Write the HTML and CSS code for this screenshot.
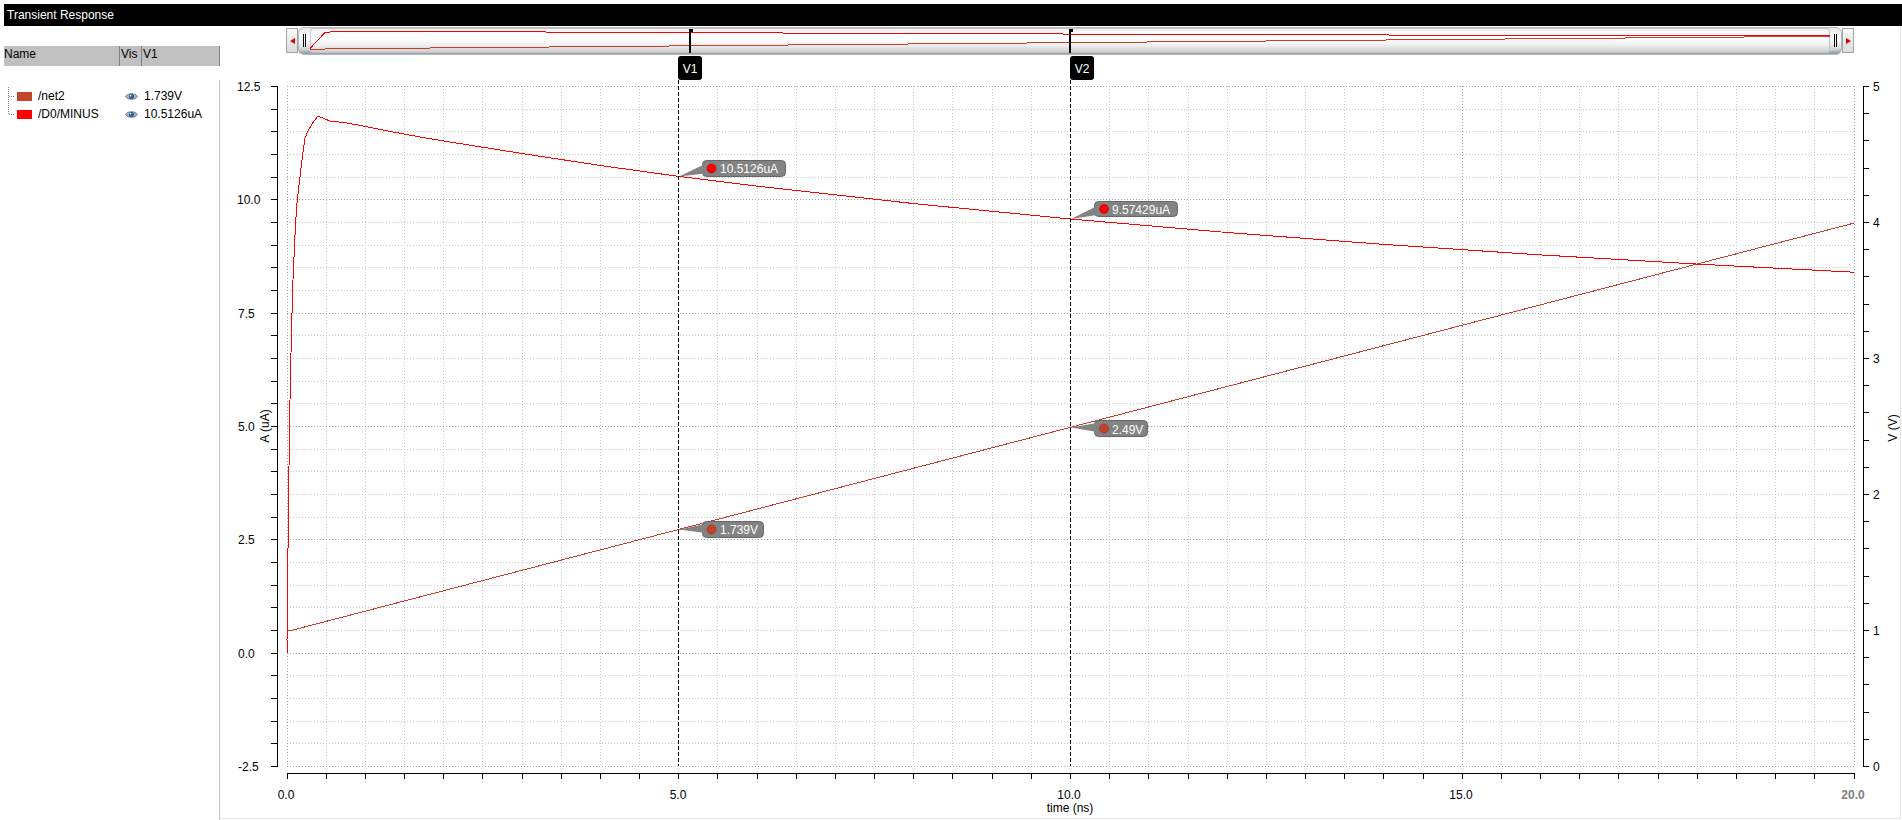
FILE: index.html
```html
<!DOCTYPE html>
<html>
<head>
<meta charset="utf-8">
<title>Transient Response</title>
<link rel="stylesheet" href="styles.css">
</head>
<body>
<div class="app">
  <div class="titlebar">Transient Response</div>
  <div class="main">
    <aside class="legend">
      <div class="lg-head">
        <div class="col name">Name</div>
        <div class="col vis">Vis</div>
        <div class="col val">V1</div>
      </div>
      <div class="lg-list">
        <div class="lg-row">
          <div class="col name">
            <svg class="tree" width="6" height="18" viewBox="0 0 6 18"><path d="M0.5 0V18M0.5 9.5H6"/></svg>
            <span class="swatch net2"></span><span>/net2</span>
          </div>
          <div class="col vis">
            <svg class="eye" width="13" height="9" viewBox="0 0 13 9"><path d="M0.5 4.5C3 0.8 10 0.8 12.5 4.5C10 8.2 3 8.2 0.5 4.5Z" fill="#a9bccf" stroke="#5f7b9a"/><circle cx="6.5" cy="4.5" r="2.6" fill="#3e5f86"/><circle cx="5.6" cy="3.7" r="0.8" fill="#fff"/></svg>
          </div>
          <div class="col val">1.739V</div>
        </div>
        <div class="lg-row">
          <div class="col name">
            <svg class="tree" width="6" height="18" viewBox="0 0 6 18"><path d="M0.5 0V9.5H6"/></svg>
            <span class="swatch minus"></span><span>/D0/MINUS</span>
          </div>
          <div class="col vis">
            <svg class="eye" width="13" height="9" viewBox="0 0 13 9"><path d="M0.5 4.5C3 0.8 10 0.8 12.5 4.5C10 8.2 3 8.2 0.5 4.5Z" fill="#a9bccf" stroke="#5f7b9a"/><circle cx="6.5" cy="4.5" r="2.6" fill="#3e5f86"/><circle cx="5.6" cy="3.7" r="0.8" fill="#fff"/></svg>
          </div>
          <div class="col val">10.5126uA</div>
        </div>
      </div>
    </aside>

    <section class="plot">
      <div class="overview">
        <div class="ov-btn left"></div>
        <div class="capsule">
          <div class="grip"><i></i><i></i></div>
          <div class="trough">
            <svg class="ov-svg" width="1520" height="25" viewBox="310 28 1520 25">
              <polyline class="ov-red" points="310,48.5 318,40 325,32.5 335,31.5 500,31.8 700,32.7 1000,33.8 1300,34.8 1600,35.5 1830,35.8"/>
              <polyline class="ov-brown" points="310,49.3 335,48.8 1830,36.3"/>
              <path class="ov-mark" d="M689 29h4v3h-2v21h-2z"/>
              <path class="ov-mark" d="M1069 29h4v3h-2v21h-2z"/>
            </svg>
          </div>
          <div class="grip"><i></i><i></i></div>
        </div>
        <div class="ov-btn right"></div>
      </div>

      <svg class="chart" width="1680" height="763" viewBox="220 55 1680 763">
        <path class="grid-minor" d="M326.5 86V766M365.5 86V766M404.5 86V766M443.5 86V766M482.5 86V766M522.5 86V766M561.5 86V766M600.5 86V766M639.5 86V766M717.5 86V766M757.5 86V766M796.5 86V766M835.5 86V766M874.5 86V766M913.5 86V766M952.5 86V766M992.5 86V766M1031.5 86V766M1109.5 86V766M1148.5 86V766M1188.5 86V766M1227.5 86V766M1266.5 86V766M1305.5 86V766M1344.5 86V766M1383.5 86V766M1423.5 86V766M1501.5 86V766M1540.5 86V766M1579.5 86V766M1618.5 86V766M1658.5 86V766M1697.5 86V766M1736.5 86V766M1775.5 86V766M1814.5 86V766"/>
        <path class="grid-minor" d="M287 109.5H1855M287 131.5H1855M287 154.5H1855M287 177.5H1855M287 222.5H1855M287 245.5H1855M287 267.5H1855M287 290.5H1855M287 335.5H1855M287 358.5H1855M287 381.5H1855M287 403.5H1855M287 449.5H1855M287 471.5H1855M287 494.5H1855M287 517.5H1855M287 562.5H1855M287 585.5H1855M287 607.5H1855M287 630.5H1855M287 675.5H1855M287 698.5H1855M287 721.5H1855M287 743.5H1855"/>
        <path class="grid-major" d="M287.5 86V766M678.5 86V766M1070.5 86V766M1462.5 86V766M1854.5 86V766M287 86.5H1855M287 199.5H1855M287 313.5H1855M287 426.5H1855M287 539.5H1855M287 653.5H1855M287 766.5H1855"/>

        <path class="axis" d="M277.5 86V767M287 773.5H1855M1863.5 86V767"/>
        <path class="axis" d="M271 86.5h6M271 109.5h6M271 131.5h6M271 154.5h6M271 177.5h6M271 199.5h6M271 222.5h6M271 245.5h6M271 267.5h6M271 290.5h6M271 313.5h6M271 335.5h6M271 358.5h6M271 381.5h6M271 403.5h6M271 426.5h6M271 449.5h6M271 471.5h6M271 494.5h6M271 517.5h6M271 539.5h6M271 562.5h6M271 585.5h6M271 607.5h6M271 630.5h6M271 653.5h6M271 675.5h6M271 698.5h6M271 721.5h6M271 743.5h6M271 766.5h6"/>
        <path class="axis" d="M287.5 773v6M326.5 773v6M365.5 773v6M404.5 773v6M443.5 773v6M482.5 773v6M522.5 773v6M561.5 773v6M600.5 773v6M639.5 773v6M678.5 773v6M717.5 773v6M757.5 773v6M796.5 773v6M835.5 773v6M874.5 773v6M913.5 773v6M952.5 773v6M992.5 773v6M1031.5 773v6M1070.5 773v6M1109.5 773v6M1148.5 773v6M1188.5 773v6M1227.5 773v6M1266.5 773v6M1305.5 773v6M1344.5 773v6M1383.5 773v6M1423.5 773v6M1462.5 773v6M1501.5 773v6M1540.5 773v6M1579.5 773v6M1618.5 773v6M1658.5 773v6M1697.5 773v6M1736.5 773v6M1775.5 773v6M1814.5 773v6M1854.5 773v6"/>
        <path class="axis" d="M1863 86.5h6M1863 113.5h6M1863 140.5h6M1863 168.5h6M1863 195.5h6M1863 222.5h6M1863 249.5h6M1863 276.5h6M1863 304.5h6M1863 331.5h6M1863 358.5h6M1863 385.5h6M1863 412.5h6M1863 440.5h6M1863 467.5h6M1863 494.5h6M1863 521.5h6M1863 548.5h6M1863 576.5h6M1863 603.5h6M1863 630.5h6M1863 657.5h6M1863 684.5h6M1863 712.5h6M1863 739.5h6M1863 766.5h6"/>

        <g class="lbl">
          <text x="237" y="90.5">12.5</text>
          <text x="237" y="203.5">10.0</text>
          <text x="238" y="317.5">7.5</text>
          <text x="238" y="430.5">5.0</text>
          <text x="238" y="543.5">2.5</text>
          <text x="238" y="657.5">0.0</text>
          <text x="238" y="770.5">-2.5</text>

          <text x="1873" y="90.5">5</text>
          <text x="1873" y="226.5">4</text>
          <text x="1873" y="362.5">3</text>
          <text x="1873" y="498.5">2</text>
          <text x="1873" y="634.5">1</text>
          <text x="1873" y="770.5">0</text>

          <text class="mid" x="286" y="799">0.0</text>
          <text class="mid" x="678" y="799">5.0</text>
          <text class="mid" x="1069" y="799">10.0</text>
          <text class="mid" x="1461" y="799">15.0</text>
          <text class="mid last" x="1853" y="799">20.0</text>
          <text class="mid" x="1070" y="812">time (ns)</text>

          <text class="mid" transform="translate(269 426) rotate(-90)">A (uA)</text>
          <text class="mid" transform="translate(1897 428) rotate(-90)">V (V)</text>
        </g>

        <polyline class="trace-v" points="287,630.5 293,630 1854,223.1"/>
        <polyline class="trace-i" points="287,653 287,640 287.5,600 288.5,500 290,400 291.5,330 293,280 294,257 295.5,225 297,203 298.5,190 300,177 302,160 303,152 305,138 308,131 312,124 318,116 325,119 330,121 347,123 363,126 380,129.5 420,137 443.7,141 522,153.5 600.4,165.5 678.75,176.4 757.1,186.1 913.8,203.6 1070.5,219 1227.2,232.5 1383.9,244.4 1540.6,254.9 1697.3,264.1 1854,272.2"/>

        <path class="cursor" d="M678.5 80V766M1070.5 80V766"/>
        <g class="cur-lbl">
          <rect x="678" y="56" width="24" height="24" rx="3"/>
          <text x="690" y="73">V1</text>
          <rect x="1070" y="56" width="24" height="24" rx="3"/>
          <text x="1082" y="73">V2</text>
        </g>

        <g class="tip">
          <rect x="702.5" y="160.5" width="83" height="16" rx="4"/>
          <polygon points="679,176.5 705,164 705,173.5"/>
          <circle class="dot-i" cx="711.5" cy="168.5" r="4.5"/>
          <text x="720" y="173">10.5126uA</text>
        </g>
        <g class="tip">
          <rect x="1094.5" y="201.5" width="83" height="15" rx="4"/>
          <polygon points="1071,219 1097,206 1097,215"/>
          <circle class="dot-i" cx="1104" cy="209" r="4.5"/>
          <text x="1112" y="213.5">9.57429uA</text>
        </g>
        <g class="tip">
          <rect x="1094.5" y="420.5" width="53" height="16" rx="4"/>
          <polygon points="1071,427.5 1097,423 1097,432"/>
          <circle class="dot-v" cx="1104" cy="428.5" r="4.5"/>
          <text x="1112" y="433.5">2.49V</text>
        </g>
        <g class="tip">
          <rect x="702.5" y="521.5" width="61" height="16" rx="4"/>
          <polygon points="679,529.5 705,524 705,533"/>
          <circle class="dot-v" cx="711.5" cy="529.5" r="4.5"/>
          <text x="720" y="534">1.739V</text>
        </g>
      </svg>
    </section>
  </div>
</div>
</body>
</html>
```

FILE: styles.css
```css
html, body {
  margin: 0;
  padding: 0;
  background: #ffffff;
}

body {
  font-family: "Liberation Sans", Arial, sans-serif;
  font-size: 12px;
  color: #000;
  overflow: hidden;
}

.app {
  width: 1898px;
  height: 816px;
  padding: 4px 0 0 4px;
  display: flex;
  flex-direction: column;
}

.titlebar {
  height: 22px;
  line-height: 22px;
  background: #000;
  color: #fff;
  padding-left: 3px;
  white-space: nowrap;
}

.main {
  display: flex;
  height: 794px;
}

/* ---------- legend ---------- */
.legend {
  width: 216px;
  flex: none;
  display: flex;
  flex-direction: column;
}

.lg-head {
  margin-top: 20px;
  height: 20px;
  line-height: 16px;
  background: #c0c0c0;
  display: grid;
  grid-template-columns: 116px 22px 78px;
}

.lg-head .col {
  box-sizing: border-box;
  border-right: 1px solid #808080;
  white-space: nowrap;
  padding-left: 1px;
}

.lg-head .name {
  padding-left: 0;
}

.lg-list {
  margin-top: 14px;
  flex: 1;
  box-sizing: border-box;
  border-right: 1px solid #c4c4c4;
  padding-top: 7px;
}

.lg-row {
  display: grid;
  grid-template-columns: 116px 22px 78px;
  height: 18px;
  line-height: 18px;
  white-space: nowrap;
}

.lg-row .name {
  display: flex;
  align-items: center;
}

.tree {
  flex: none;
  margin-left: 4px;
  display: block;
}

.tree path {
  fill: none;
  stroke: #808080;
  stroke-dasharray: 1 1;
  shape-rendering: crispEdges;
}

.swatch {
  flex: none;
  width: 15px;
  height: 9px;
  margin-left: 3px;
  margin-right: 6px;
}

.swatch.net2 { background: #c4442c; }
.swatch.minus { background: #ff0000; }

.lg-row .vis {
  padding-left: 5px;
  display: flex;
  align-items: center;
}

.eye { display: block; }

.lg-row .val {
  padding-left: 2px;
}

/* ---------- plot ---------- */
.plot {
  width: 1681px;
  height: 793px;
  box-sizing: border-box;
  border-right: 1px solid #e6e6e6;
  border-bottom: 1px solid #e6e6e6;
  display: flex;
  flex-direction: column;
}

.overview {
  display: flex;
  align-items: flex-start;
  height: 28px;
  margin: 1px 0 0 66px;
  flex: none;
}

.ov-btn {
  width: 12px;
  height: 25px;
  margin-top: 1px;
  box-sizing: border-box;
  border: 1px solid #a4a4a4;
  background: linear-gradient(#fbfbfb, #dadada);
  display: flex;
  align-items: center;
  justify-content: center;
}

.ov-btn.left::before {
  content: "";
  border-right: 5px solid #e00000;
  border-top: 3px solid transparent;
  border-bottom: 3px solid transparent;
}

.ov-btn.right::before {
  content: "";
  border-left: 5px solid #e00000;
  border-top: 3px solid transparent;
  border-bottom: 3px solid transparent;
}

.capsule {
  width: 1544px;
  height: 28px;
  box-sizing: border-box;
  border: 1px solid #b4b9be;
  border-radius: 6px;
  background: linear-gradient(#e4e6e8 0%, #fbfbfb 25%, #ffffff 40%, #e6e6e6 70%, #c9cdd1 85%, #a0a8b0 92%, #98a0a8 100%);
  display: flex;
  align-items: flex-start;
}

.grip {
  width: 11px;
  height: 25px;
  flex: none;
  display: flex;
  justify-content: center;
  align-items: center;
  gap: 1px;
}

.grip i {
  display: block;
  width: 1px;
  height: 13px;
  background: #000;
}

.trough {
  width: 1520px;
  height: 25px;
  flex: none;
  border-radius: 4px;
  box-shadow: inset 0 0 0 1px #c3c6c9;
  background: linear-gradient(#ececec 0%, #fdfdfd 20%, #ffffff 45%, #eeeeee 70%, #d6d6d6 90%, #c4c4c4 100%);
}

.ov-svg {
  display: block;
}

.ov-svg polyline {
  fill: none;
  stroke-width: 1;
  shape-rendering: crispEdges;
}

.ov-red { stroke: #ff0000; }
.ov-brown { stroke: #c4402a; }
.ov-mark { fill: #000; }

.chart {
  display: block;
  flex: none;
}

.grid-minor,
.grid-major {
  fill: none;
  stroke-width: 1;
  stroke-dasharray: 1 2;
  shape-rendering: crispEdges;
}

.grid-minor { stroke: #c8c8c8; }
.grid-major { stroke: #a4a4a4; }

.axis {
  fill: none;
  stroke: #000;
  stroke-width: 1;
  shape-rendering: crispEdges;
}

.chart text {
  font-family: "Liberation Sans", Arial, sans-serif;
  font-size: 12px;
  fill: #000;
}

.chart text.mid {
  text-anchor: middle;
}

.chart text.last {
  fill: #808080;
  font-weight: bold;
}

.trace-i,
.trace-v {
  fill: none;
  stroke-width: 1;
  shape-rendering: crispEdges;
}

.trace-i { stroke: #ff0000; }
.trace-v { stroke: #c4402a; }

.cursor {
  fill: none;
  stroke: #000;
  stroke-width: 1;
  stroke-dasharray: 4 2;
  shape-rendering: crispEdges;
}

.cur-lbl rect { fill: #000; }

.chart .cur-lbl text {
  fill: #fff;
  text-anchor: middle;
}

.tip rect {
  fill: #838383;
  stroke: #676767;
  stroke-width: 1;
}

.tip polygon {
  fill: #838383;
}

.chart .tip text {
  fill: #fff;
}

.dot-i { fill: #ff0000; stroke: #c00000; stroke-width: 0.6; }
.dot-v { fill: #c4402a; stroke: #9a2e1c; stroke-width: 0.6; }
```
